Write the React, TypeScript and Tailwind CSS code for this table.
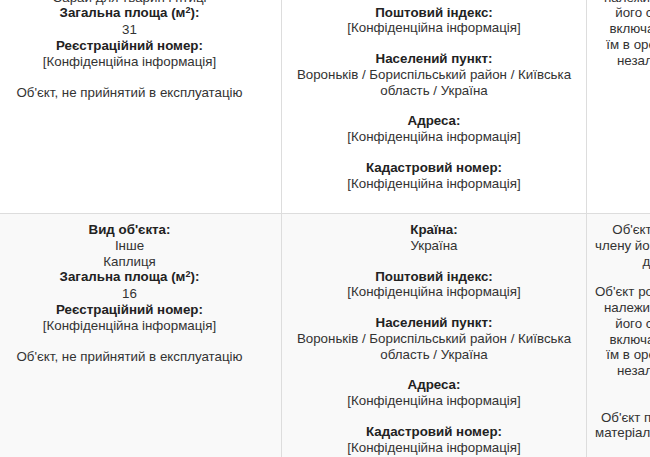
const FONT = "font-['Liberation_Sans',Arial,sans-serif]"

interface Block {
    label: string
    lines: string[]
}

interface Row {
    kind: string[]
    area: string
    address: Block[]
    notes: string[][]
    muted?: boolean
    tall?: boolean
}

const CONF = '[Конфіденційна інформація]'

const address: Block[] = [
    { label: 'Країна:', lines: ['Україна'] },
    { label: 'Поштовий індекс:', lines: [CONF] },
    { label: 'Населений пункт:', lines: ['Вороньків / Бориспільський район / Київська', 'область / Україна'] },
    { label: 'Адреса:', lines: [CONF] },
    { label: 'Кадастровий номер:', lines: [CONF] },
]

const landNote = [
    "Об'єкт розташований на земельній ділянці, котра",
    'належить на праві власності особі чи члену',
    "його сім'ї, або перебуває у користуванні",
    'включаючи ті, що були надані декларанту',
    'їм в оренду або на іншому праві володіння',
    'незалежно від форми укладання угоди,',
    'про таке користування',
]

const rows: Row[] = [
    {
        kind: ['Інше', 'Сарай для тварин і птиці'],
        area: '31',
        address,
        tall: true,
        notes: [[landNote[0], 'що знаходиться в межах населеного пункту та', ...landNote.slice(1)]],
    },
    {
        kind: ['Інше', 'Каплиця'],
        area: '16',
        address,
        muted: true,
        notes: [
            [
                "Об'єкт, права на який має декларант або",
                "члену його сім'ї на підставі договору, внесеного до",
                'дати прийняття в експлуатацію',
            ],
            landNote,
            [
                "Об'єкт повністю або частково побудований з",
                'матеріалів чи коштом декларанта чи члена його',
                "сім'ї",
            ],
        ],
    },
]

function Label({ children, className = '' }: { children: React.ReactNode; className?: string }) {
    return <div className={`font-bold text-[#222] ${className}`}>{children}</div>
}

export default function App() {
    return (
        <div className={`w-[650px] h-[457px] overflow-hidden bg-white ${FONT} text-[13.33px] leading-[15.75px] text-[#333]`}>
            <table className="-mt-[51px] -ml-[23px] border-collapse table-fixed w-[914px]">
                <colgroup>
                    <col className="w-[304px]" />
                    <col className="w-[305px]" />
                    <col className="w-[305px]" />
                </colgroup>
                <tbody>
                    {rows.map((row, i) => (
                        <tr key={i} className={`${row.muted ? 'bg-[#f9f9f9]' : 'bg-white'} ${row.tall ? 'h-[264px]' : ''}`}>
                            {/* Object */}
                            <td className="border border-[#dddddd] px-2 pt-2 pb-[15px] align-top text-center">
                                <Label>Вид об'єкта:</Label>
                                {row.kind.map((k) => (
                                    <div key={k}>{k}</div>
                                ))}
                                <Label className="pb-[1px]">
                                    Загальна площа (м<sup className="text-[9px]">2</sup>):
                                </Label>
                                <div>{row.area}</div>
                                <Label>Реєстраційний номер:</Label>
                                <div className="mb-[16px]">{CONF}</div>
                                <div>Об'єкт, не прийнятий в експлуатацію</div>
                            </td>

                            {/* Address */}
                            <td className="border border-[#dddddd] px-2 pt-2 align-top text-center">
                                {row.address.map((b) => (
                                    <div key={b.label} className="mb-[15px]">
                                        <Label>{b.label}</Label>
                                        {b.lines.map((l) => (
                                            <div key={l}>{l}</div>
                                        ))}
                                    </div>
                                ))}
                            </td>

                            {/* Notes */}
                            <td className="border border-[#dddddd] px-2 pt-2 align-top text-center">
                                {row.notes.map((p, j) => (
                                    <div key={j} className="mb-[15px]">
                                        {p.map((l) => (
                                            <div key={l} className="whitespace-nowrap">
                                                {l}
                                            </div>
                                        ))}
                                    </div>
                                ))}
                            </td>
                        </tr>
                    ))}
                </tbody>
            </table>
        </div>
    )
}
